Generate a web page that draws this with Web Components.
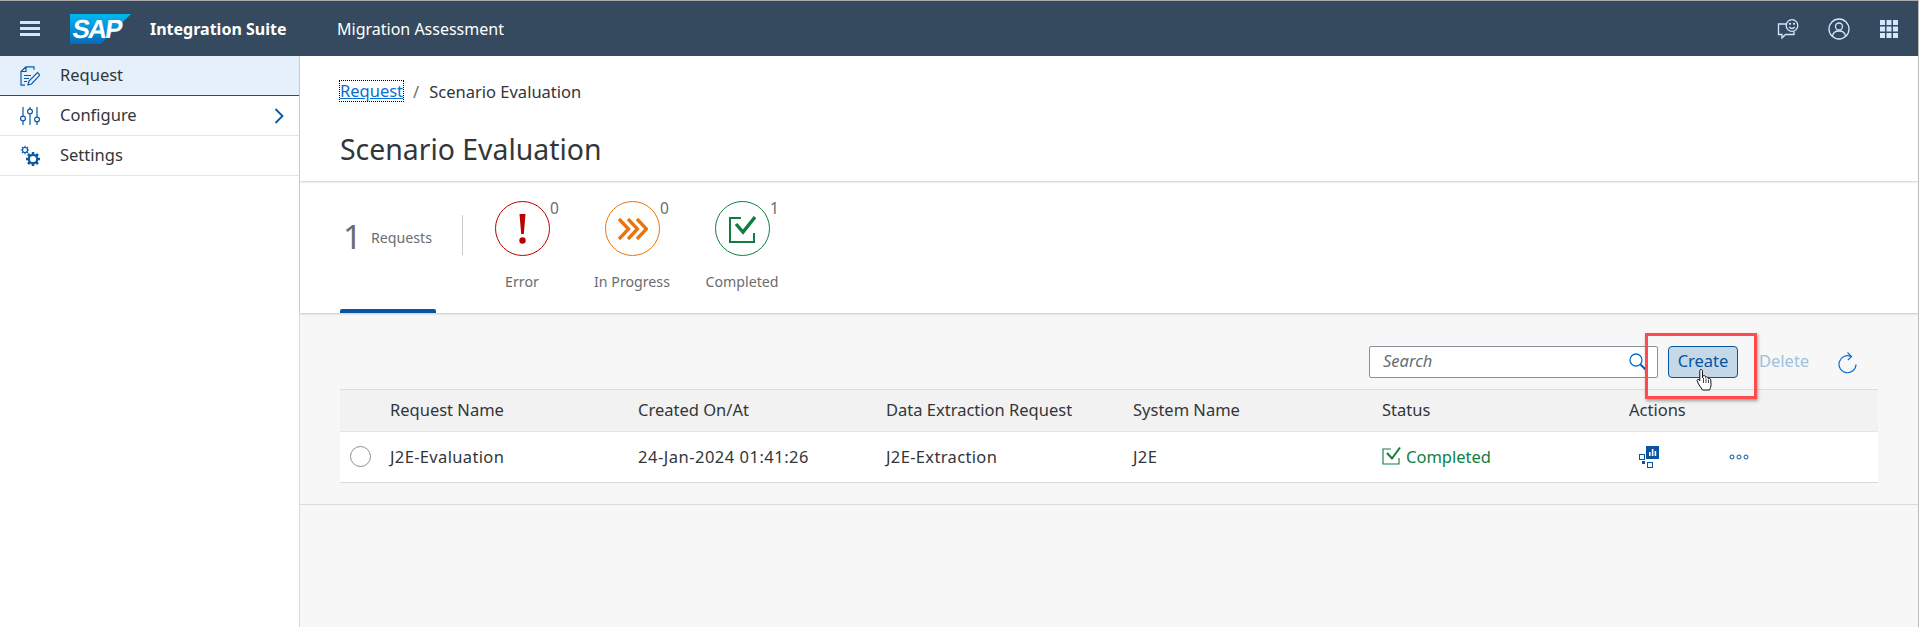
<!DOCTYPE html>
<html><head><meta charset="utf-8"><title>Scenario Evaluation</title>
<style>
html,body{margin:0;height:100%;overflow:hidden;background:#fff}
body{font-family:"Noto Sans","Open Sans",sans-serif;font-size:16.5px;color:#32363a}
</style></head><body>
<sap-app>
  <sap-shellbar slot="top"></sap-shellbar>
  <sap-sidenav slot="nav">
    <sap-navitem active label="Request"><svg viewBox="0 0 20 20" width="20" height="20" fill="none" stroke="#0a5aa5" stroke-width="1.2"><path d="M6 .8h8v3M6 .8 1 5.500v13.700h4M1 5.500h5V.8M4 9.500h7M4 12.500h5M4 15.500h3"/><path d="M8 19l1-4 8.500-8.500 2.500 2.500L11.500 18z"/></svg></sap-navitem>
    <sap-navitem label="Configure" chevron><svg viewBox="0 0 20 20" width="20" height="20" fill="none" stroke="#0a5aa5" stroke-width="1.2"><path d="M3 1v9M3 15v4M10 1v2M10 8v11M17 1v10M17 16v3"/><circle cx="3" cy="12.500" r="2.400"/><circle cx="10" cy="5.500" r="2.400"/><circle cx="17" cy="13.500" r="2.400"/></svg></sap-navitem>
    <sap-navitem label="Settings"><svg viewBox="0 0 20 21" width="20" height="21" fill="none" stroke="#0a5aa5"><circle cx="5" cy="5" r="2.500" stroke-width="1.200"/><path d="M5 .8v1.500M5 7.700v1.500M.8 5h1.500M7.700 5h1.500M2 2l1.200 1.200M6.800 6.800L8 8M8 2L6.800 3.200M3.200 6.800L2 8" stroke-width="1.200"/><circle cx="13" cy="14" r="4.200" stroke-width="2.200"/><path d="M13 7v3M13 18v3M6 14h3M17 14h3M8 9l2 2M16 17l2 2M18 9l-2 2M10 17l-2 2" stroke-width="2.600"/></svg></sap-navitem>
  </sap-sidenav>
  <sap-pagehead slot="main"></sap-pagehead>
  <sap-stats slot="main"></sap-stats>
  <sap-content slot="main">
    <sap-toolbar></sap-toolbar>
    <sap-table></sap-table>
  </sap-content>
</sap-app>
<script>
function def(name, html){
  customElements.define(name, class extends HTMLElement{
    connectedCallback(){
      if(this.shadowRoot) return;
      const r=this.attachShadow({mode:'open'});
      r.innerHTML = typeof html==='function'?html(this):html;
    }
  });
}
def('sap-app',`<style>
:host{display:grid;grid-template-columns:300px 1fr;grid-template-rows:55px 571px;height:627px;box-sizing:border-box;border-top:1px solid #aaa;border-right:1px solid #bbb;overflow:hidden}
.top{grid-column:1/3}
.nav{border-right:1px solid #d9d9d9;background:#fff}
.main{display:flex;flex-direction:column;background:#f7f7f7;min-width:0}
</style><div class="top"><slot name="top"></slot></div><div class="nav"><slot name="nav"></slot></div><div class="main"><slot name="main"></slot></div>`);

def('sap-shellbar',`<style>
:host{display:flex;align-items:center;height:55px;background:#354a5f;color:#fff;font-size:16px;font-family:"Noto Sans",sans-serif}
.burger{width:20px;height:15px;margin-left:20px;display:flex;flex-direction:column;justify-content:space-between}
.burger i{display:block;height:3px;background:#d1e8ff}
.logo{position:relative;width:61px;height:30px;margin-left:30px;flex:none}
.logo svg{display:block}
.logo span{position:absolute;left:1px;top:2px;font:700 26px/26px "Liberation Sans",sans-serif;color:#fff;letter-spacing:-1.700px;transform:skewX(-8deg);transform-origin:left bottom}
.prod{margin-left:19px;font-weight:700;width:187px;white-space:nowrap}
.title{white-space:nowrap}
.sp{flex:1}
.ic{display:flex;margin-right:20px;align-items:center;gap:0}
.ic svg{display:block}
</style>
<div class="burger"><i></i><i></i><i></i></div>
<div class="logo"><svg width="61" height="30" viewBox="0 0 61 30"><defs><linearGradient id="g" x1="0" y1="0" x2="0" y2="1"><stop offset="0" stop-color="#00b8f1"/><stop offset="1" stop-color="#0a6ab8"/></linearGradient></defs><path d="M0 0H61L31 30H0Z" fill="url(#g)"/></svg><span>SAP</span></div>
<div class="prod">Integration Suite</div><div class="title">Migration Assessment</div><div class="sp"></div>
<div class="ic">
<svg width="22" height="20" viewBox="0 0 22 20" fill="none" stroke="#d1e8ff" stroke-width="1.300" style="margin-right:29px"><path d="M9 5H1.500v10.500H5V19l3.500-3.500H17v-3"/><circle cx="15" cy="6.500" r="5.800"/><path d="M12.200 8c1.500 2 4.100 2 5.600 0"/><circle cx="13" cy="4.800" r=".5"/><circle cx="17" cy="4.800" r=".5"/></svg>
<svg width="22" height="22" viewBox="0 0 22 22" fill="none" stroke="#d1e8ff" stroke-width="1.300" style="margin-right:30px"><circle cx="11" cy="11" r="10"/><circle cx="11" cy="8.500" r="3.500"/><path d="M4.500 18c.5-3.500 3-5 6.500-5s6 1.500 6.500 5"/></svg>
<svg width="18" height="18" viewBox="0 0 18 18" fill="#d1e8ff"><rect width="5" height="5"/><rect x="6.500" width="5" height="5"/><rect x="13" width="5" height="5"/><rect y="6.500" width="5" height="5"/><rect x="6.500" y="6.500" width="5" height="5"/><rect x="13" y="6.500" width="5" height="5"/><rect y="13" width="5" height="5"/><rect x="6.500" y="13" width="5" height="5"/><rect x="13" y="13" width="5" height="5"/></svg>
</div>`);

def('sap-sidenav',`<style>:host{display:block}</style><slot></slot>`);

def('sap-navitem',h=>`<style>
:host{display:flex;align-items:center;height:40px;box-sizing:border-box;border-bottom:1px solid #e5e5e5;padding-left:20px;background:#fff;font-size:16.500px;color:#32363a}
:host([active]){background:#e5f0fa;border-bottom:1px solid #0854a0;height:40px}
.i{width:20px;height:21px;display:flex;align-items:center;flex:none}
.l{margin-left:20px;flex:1;margin-top:-3px}
svg{display:block;margin-right:15px;flex:none}
</style><div class="i"><slot></slot></div><div class="l">${h.getAttribute('label')}</div>${h.hasAttribute('chevron')?'<svg width="10" height="16" viewBox="0 0 10 16" fill="none" stroke="#0854a0" stroke-width="1.800"><path d="M1.500 1l7 7-7 7"/></svg>':''}`);

def('sap-pagehead',`<style>
:host{display:block;height:125px;background:#fff;box-sizing:border-box;padding:0 40px;box-shadow:0 1px 2px rgba(0,0,0,.2);position:relative;z-index:2;overflow:hidden}
.bc{display:flex;align-items:center;height:20px;margin-top:25px;font-size:16.500px;white-space:nowrap}
a{color:#0a6ed1;text-decoration:underline;outline:1px dotted #000;outline-offset:0;line-height:20px}
.s{margin:0 10px;color:#6a6d70}
h1{margin:0;margin-top:29px;font-weight:400;font-size:28.400px;line-height:38px;color:#32363a;white-space:nowrap}
</style><div class="bc"><a>Request</a><span class="s">/</span><span>Scenario Evaluation</span></div><h1>Scenario Evaluation</h1>`);

def('sap-stat',h=>`<style>
:host{display:block;width:110px;text-align:center;position:relative;height:100%}
.c{width:55px;height:55px;box-sizing:border-box;border-radius:50%;border:1px solid var(--c);margin:19px auto 0;display:flex;align-items:center;justify-content:center;background:#fff}
.n{position:absolute;left:83px;top:17px;font-size:15.500px;color:#6a6d70;line-height:18px}
.l{margin-top:16px;font-size:14.200px;line-height:20px;color:#6a6d70;white-space:nowrap}
svg{display:block}
</style><div class="c"><slot></slot></div><span class="n">${h.getAttribute('n')}</span><div class="l">${h.getAttribute('label')}</div>`);

def('sap-stats',`<style>
:host{display:flex;height:132px;box-sizing:border-box;background:#fff;padding-left:40px;position:relative;box-shadow:0 1px 2px rgba(0,0,0,.2);z-index:1}
.tot{width:96px;display:flex;align-items:baseline;padding:33px 0 0 3px;box-sizing:border-box;position:relative;color:#6a6d70;flex:none}
.big{font-size:33px;line-height:46px}
.sm{font-size:14.200px;margin-left:9px;position:relative;top:-6px}
.bar{position:absolute;left:0;right:0;bottom:0;height:4px;background:#0854a0;border-radius:2px 2px 0 0}
.div{width:1px;height:40px;background:#ccc;margin:34px 0 0 26px;flex:none}
.st{display:flex;margin-left:4px;padding-top:1px}
</style><div class="tot"><span class="big">1</span><span class="sm">Requests</span><i class="bar"></i></div><div class="div"></div>
<div class="st"><sap-stat n="0" label="Error" style="--c:#bb0000"><svg width="7" height="30" viewBox="0 0 7 30" fill="#bb0000"><path d="M.5 0h6L4.800 20H2.200z"/><circle cx="3.500" cy="26.500" r="3.200"/></svg></sap-stat>
<sap-stat n="0" label="In Progress" style="--c:#e9730c"><svg width="31" height="24" viewBox="0 0 31 24" fill="none" stroke="#e9730c" stroke-width="3.300"><path d="M2 2l9.500 10L2 22M11 2l9.500 10L11 22M20 2l9.500 10L20 22"/></svg></sap-stat>
<sap-stat n="1" label="Completed" style="--c:#107e3e"><svg width="28" height="28" viewBox="0 0 28 28" fill="none" stroke="#107e3e" stroke-width="2"><path d="M13 3H2v24h24V18"/><path d="M8 9l7 8L27 2" stroke-width="3.400"/></svg></sap-stat></div>`);

def('sap-content',`<style>
:host{display:block;flex:1;background:#f7f7f7;padding:0 40px;position:relative}
.line{position:absolute;left:0;right:0;top:191px;height:1px;background:#dcdcdc}
</style><slot></slot><div class="line"></div>`);

def('sap-toolbar',`<style>
:host{display:flex;height:76px;box-sizing:border-box;padding-top:33px;align-items:flex-start;position:relative}
.search{margin-left:1029px;width:289px;height:32px;box-sizing:border-box;border:1px solid #89919a;border-radius:2px;background:#fff;display:flex;align-items:center;padding:0 10px 0 13px;font-style:italic;color:#6a6d70;font-size:16.500px;flex:none}
.search span{flex:1;margin-top:-4px}
.create{margin-left:10px;width:70px;height:32px;box-sizing:border-box;border:1px solid #0854a0;border-radius:4px;background:#c5d8e8;color:#0854a0;font-size:16.500px;display:flex;align-items:center;justify-content:center;flex:none;padding-bottom:4px}
.del{margin-left:21px;height:32px;display:flex;align-items:center;font-size:16.500px;color:#a0c0e0;width:48px;flex:none;padding-bottom:4px;box-sizing:border-box}
.ref{margin-left:31px;margin-top:6px;flex:none}
.box{position:absolute;left:1305px;top:20px;width:112px;height:66px;box-sizing:border-box;border:3px solid #ff4b4b;box-shadow:1px 2px 3px rgba(0,0,0,.35);z-index:5}
.hand{position:absolute;left:1356px;top:55px;z-index:6}
svg{display:block}
</style>
<div class="search"><span>Search</span><svg width="18" height="18" viewBox="0 0 18 18" fill="none" stroke="#0a6ed1" stroke-width="1.300"><circle cx="7" cy="7" r="6"/><path d="M11.500 11.500L17 17" stroke="#0854a0" stroke-width="1.800"/></svg></div>
<div class="create">Create</div><div class="del">Delete</div>
<svg class="ref" width="19" height="22" viewBox="0 0 19 22" fill="none" stroke="#0a6ed1" stroke-width="1.200"><path d="M13 4.500a8.500 8.500 0 1 0 5 8"/><path d="M9.500 .5l4 4-3.500 3.500"/></svg>
<div class="box"></div>
<svg class="hand" width="18" height="24" viewBox="0 0 18 24"><path d="M5 1.500c1 0 1.500.7 1.500 1.700V10l.3-2c1 -.8 2 -.6 2.500.3l.2 1c1-.8 2-.6 2.500.4l.2.800c1-.5 2.300 0 2.500 1.200l.3 5c0 2-.5 3-1.500 5.300H6.500L2.500 16 1 12.500c0-1 1-1.500 2-.8l.8 1.200V3.200C3.800 2.200 4 1.500 5 1.500z" fill="#fff" stroke="#111" stroke-width="1"/><path d="M7.500 10v5M10 10.500v4.500M12.500 11.500v3.500" stroke="#111" stroke-width=".8"/></svg>`);

def('sap-table',`<style>
:host{display:block;font-size:16.500px;white-space:nowrap}
.r{display:grid;grid-template-columns:50px 248px 248px 247px 249px 247px 1fr;align-items:center}
.h{height:43px;background:#f2f2f2;border-top:1px solid #dcdcdc;border-bottom:1px solid #e5e5e5;box-sizing:border-box;color:#32363a}
.b{height:51px;background:#fff;border-bottom:1px solid #d9d9d9;box-sizing:border-box}
.r>div{margin-top:-2px}
.v{letter-spacing:.35px}
.d{letter-spacing:.5px}
.radio{width:21px;height:21px;box-sizing:border-box;border:1px solid #89919a;border-radius:50%;background:#fff;margin:3px 0 0 10px}
.ok{display:flex;align-items:center;color:#107e3e;gap:4px}
.act{display:flex;align-items:center}
svg{display:block}
</style>
<div class="r h"><div></div><div>Request Name</div><div>Created On/At</div><div>Data Extraction Request</div><div>System Name</div><div>Status</div><div>Actions</div></div>
<div class="r b"><div class="radio"></div><div class="v">J2E-Evaluation</div><div class="d">24-Jan-2024 01:41:26</div><div class="v">J2E-Extraction</div><div class="v">J2E</div>
<div class="ok"><svg width="20" height="20" viewBox="0 0 20 20" fill="none" stroke="#107e3e" stroke-width="1.100"><path d="M9 3H1v15h16v-6"/><path d="M5 7l5 5.500L18 1.500" stroke-width="2"/></svg>Completed</div>
<div class="act"><svg style="margin-left:10px;margin-top:2px" width="20" height="22" viewBox="0 0 20 22"><rect x="7" y="0" width="13" height="13" fill="#0854a0"/><path d="M10 10V6h1.600v4zM12.800 10V3h1.600v7zM15.600 10V5h1.600v5z" fill="#fff"/><rect x=".5" y="8.500" width="5" height="5" fill="#fff" stroke="#0854a0"/><rect x="3" y="15" width="3" height="3" fill="#0854a0"/><rect x="8.500" y="16.500" width="5" height="5" fill="#fff" stroke="#0854a0"/></svg>
<svg style="margin-left:70px;margin-top:2px" width="20" height="8" viewBox="0 0 20 8" fill="none" stroke="#0854a0" stroke-width="1"><circle cx="3" cy="4" r="2"/><circle cx="10" cy="4" r="2"/><circle cx="17" cy="4" r="2"/></svg></div></div>`);
</script>
</body></html>
